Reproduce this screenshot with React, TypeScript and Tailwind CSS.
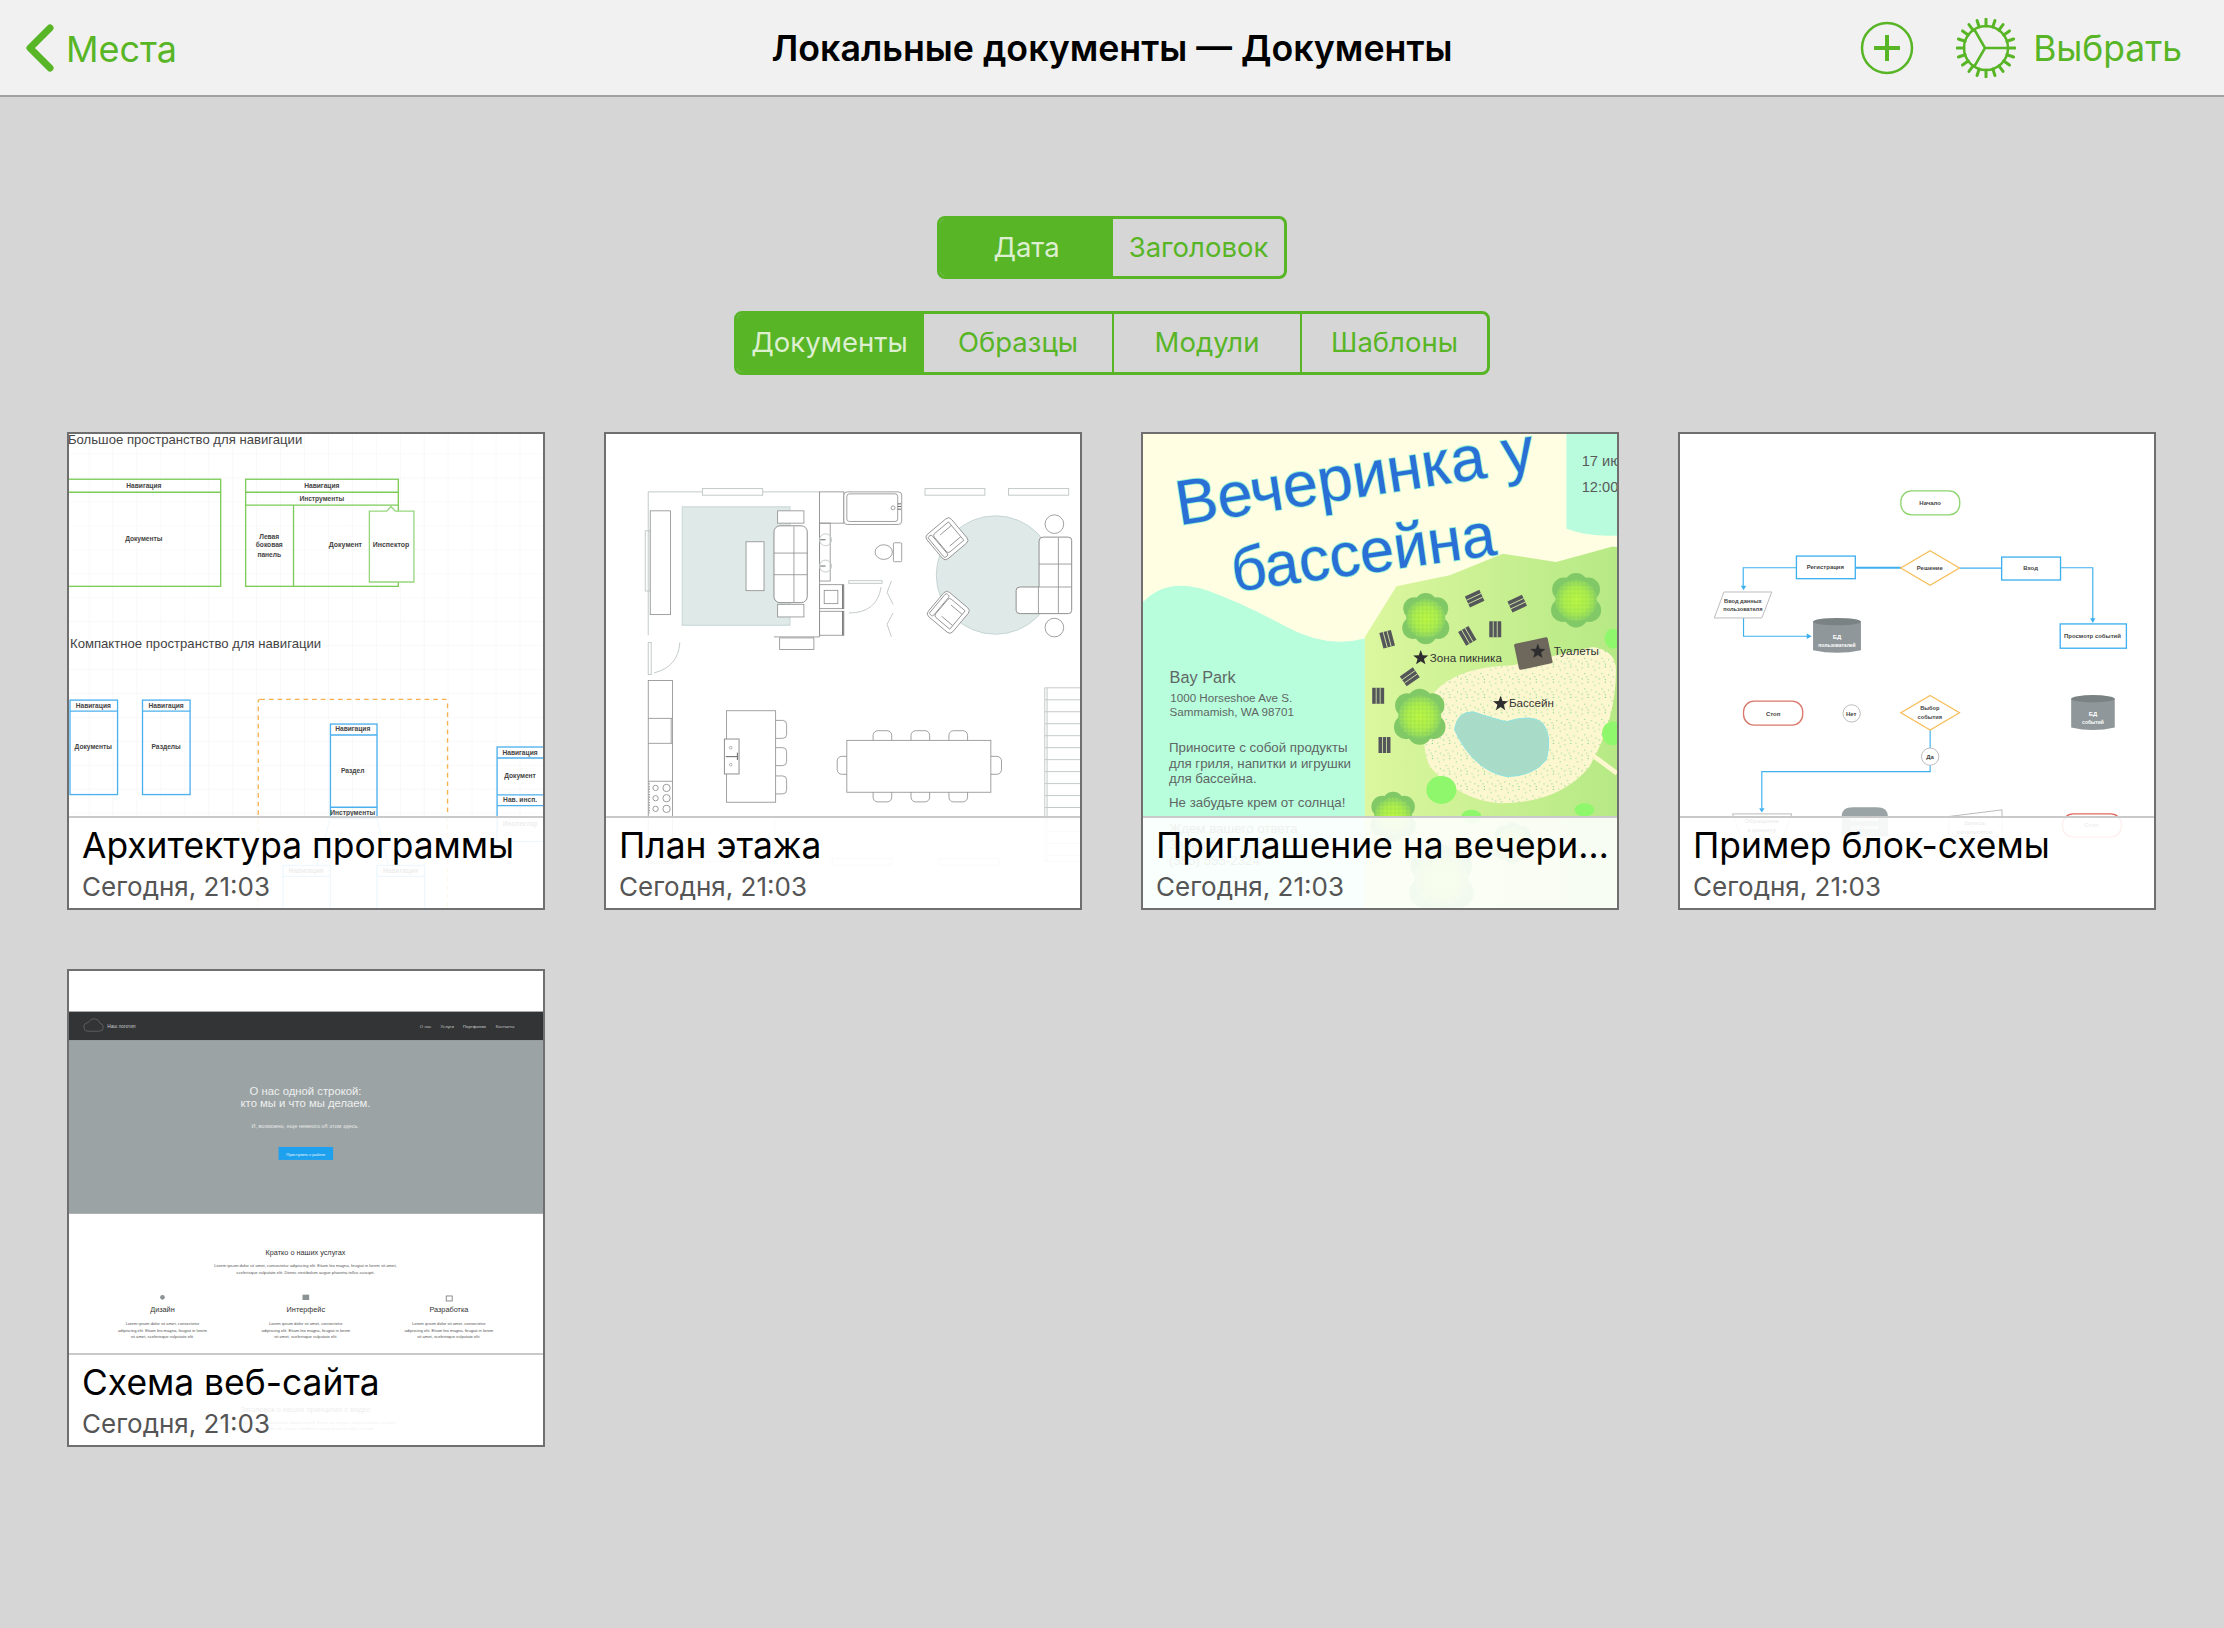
import type { ReactNode } from 'react';

const green = '#58b526';

function Lbl({ x, y, s = 18, t, fill = '#444', bold = false, start = false }: { x: number; y: number; s?: number; t: string; fill?: string; bold?: boolean; start?: boolean }) {
  return (
    <text x={x} y={y} fontSize={s} fill={fill} fontWeight={bold ? 700 : 400} textAnchor={start ? 'start' : 'middle'}>
      {t}
    </text>
  );
}

function ALbl({ x, y, t }: { x: number; y: number; t: string }) {
  return <Lbl x={x} y={y} t={t} s={20} bold />;
}

function Thumb({ box, children }: { box: string; children: ReactNode }) {
  return (
    <svg viewBox={box} className="block h-full w-full" fontFamily="'Liberation Sans', Arial, sans-serif" fill="none">
      {children}
    </svg>
  );
}

function Box({ x1, y1, x2, y2, stroke, sw = 4, fill = 'none', rx = 0 }: { x1: number; y1: number; x2: number; y2: number; stroke: string; sw?: number; fill?: string; rx?: number }) {
  return <rect x={x1} y={y1} width={x2 - x1} height={y2 - y1} stroke={stroke} strokeWidth={sw} fill={fill} rx={rx} />;
}

function ArchThumb() {
  const g = '#7ccb58';
  const b = '#4cb0ee';
  const grid = [];
  for (let i = 0; i < 20; i++) {
    grid.push(<path key={'v' + i} d={`M${115 + i * 72} 40V1465`} stroke="#f6f6f6" strokeWidth="2" />);
    grid.push(<path key={'h' + i} d={`M55 ${100 + i * 72}H1480`} stroke="#f6f6f6" strokeWidth="2" />);
  }
  return (
    <Thumb box="55 40 1425 1425">
      <rect x="55" y="40" width="1425" height="1425" fill="#fff" />
      {grid}
      <Lbl x={52} y={69} s={39.5} t="Большое пространство для навигации" start />
      <Box x1={50} y1={176} x2={511} y2={498} stroke={g} />
      <path d="M50 215H511" stroke={g} strokeWidth="4" />
      <ALbl x={280} y={202} t="Навигация" />
      <ALbl x={280} y={362} t="Документы" />
      <Box x1={586} y1={176} x2={1045} y2={498} stroke={g} />
      <path d="M586 215H1045M586 254H1045M730 254V498" stroke={g} strokeWidth="4" />
      <ALbl x={815} y={202} t="Навигация" />
      <ALbl x={815} y={241} t="Инструменты" />
      <ALbl x={657} y={355} t="Левая" />
      <ALbl x={657} y={381} t="боковая" />
      <ALbl x={657} y={411} t="панель" />
      <Lbl x={886} y={381} t="Документ" s={21} bold />
      <path d="M958 272H1010L1023 258L1036 272H1092V485H958Z" stroke="#98d67e" strokeWidth="4" fill="#fff" />
      <Lbl x={1023} y={379} t="Инспектор" s={21} bold />
      <Lbl x={58} y={682} s={39.5} t="Компактное пространство для навигации" start />
      <Box x1={58} y1={840} x2={201} y2={1124} stroke={b} />
      <path d="M58 873H201" stroke={b} strokeWidth="4" />
      <ALbl x={128} y={864} t="Навигация" />
      <ALbl x={128} y={988} t="Документы" />
      <Box x1={276} y1={840} x2={419} y2={1124} stroke={b} />
      <path d="M276 873H419" stroke={b} strokeWidth="4" />
      <ALbl x={347} y={864} t="Навигация" />
      <ALbl x={347} y={988} t="Разделы" />
      <rect x="624" y="838" width="569" height="640" rx="6" stroke="#f6b24f" strokeWidth="4" strokeDasharray="14 12" />
      <Box x1={841} y1={912} x2={981} y2={1195} stroke={b} />
      <path d="M841 945H981M841 1162H981" stroke={b} strokeWidth="4" />
      <ALbl x={908} y={933} t="Навигация" />
      <ALbl x={908} y={1059} t="Раздел" />
      <ALbl x={908} y={1185} t="Инструменты" />
      <path d="M841 1195L800 1337M981 1195L1015 1337" stroke={b} strokeWidth="3" />
      <Box x1={698} y1={1337} x2={841} y2={1480} stroke={b} />
      <Box x1={981} y1={1337} x2={1124} y2={1480} stroke={b} />
      <path d="M698 1370H841M981 1370H1124" stroke={b} strokeWidth="4" />
      <ALbl x={768} y={1360} t="Навигация" />
      <ALbl x={1052} y={1360} t="Навигация" />
      <Box x1={1342} y1={981} x2={1500} y2={1265} stroke={b} />
      <path d="M1342 1014H1500M1342 1125H1500M1342 1157H1500" stroke={b} strokeWidth="4" />
      <ALbl x={1411} y={1004} t="Навигация" />
      <ALbl x={1411} y={1073} t="Документ" />
      <ALbl x={1411} y={1147} t="Нав. инсп." />
      <ALbl x={1411} y={1217} t="Инспектор" />
    </Thumb>
  );
}

function Armchair({ x, y, rot }: { x: number; y: number; rot: number }) {
  return (
    <g transform={`translate(${x} ${y}) rotate(${rot})`} stroke="#8b8b8b" strokeWidth="2.5" fill="#fff">
      <rect x="-48" y="-48" width="96" height="96" rx="12" />
      <rect x="-42" y="-40" width="14" height="80" rx="5" />
      <path d="M-26 -28Q-26 -36 -18 -36H36V36H-18Q-26 36 -26 28Z" />
      <path d="M-8 -22H36M-8 22H36" />
    </g>
  );
}

function PlanThumb() {
  const line = '#8f8f8f';
  const wall = '#c4caca';
  const stairs = [];
  for (let y = 803; y < 1330; y += 36) stairs.push(<path key={y} d={`M1364 ${y}H1471`} stroke={wall} strokeWidth="3" />);
  return (
    <Thumb box="45 40 1425 1425">
      <rect x="45" y="40" width="1425" height="1425" fill="#fff" />
      <path d="M172 645V214H688" stroke={wall} strokeWidth="3" />
      <Box x1={335} y1={204} x2={516} y2={224} stroke={wall} sw={3} fill="#fff" />
      <Box x1={1004} y1={204} x2={1184} y2={224} stroke={wall} sw={3} fill="#fff" />
      <Box x1={1255} y1={204} x2={1436} y2={224} stroke={wall} sw={3} fill="#fff" />
      <Box x1={163} y1={331} x2={178} y2={512} stroke={wall} sw={3} />
      <Box x1={178} y1={271} x2={239} y2={583} stroke={line} sw={2.5} fill="#fff" />
      <Box x1={274} y1={259} x2={598} y2={615} stroke="#c5d5d3" sw={3} fill="#dfe9e8" />
      <Box x1={466} y1={364} x2={520} y2={511} stroke={line} sw={2.5} fill="#fff" />
      <Box x1={561} y1={271} x2={640} y2={308} stroke={line} sw={2.5} fill="#fff" />
      <Box x1={561} y1={552} x2={640} y2={590} stroke={line} sw={2.5} fill="#fff" />
      <Box x1={550} y1={316} x2={650} y2={547} stroke={line} sw={3} fill="#fff" rx={18} />
      <path d="M610 318V545M550 398H650M550 463H650" stroke={line} strokeWidth="2.5" />
      <path d="M687 214V650H550" stroke={line} strokeWidth="2.5" />
      <Box x1={567} y1={653} x2={670} y2={688} stroke={line} sw={2.5} fill="#fff" />
      <Box x1={687} y1={214} x2={760} y2={308} stroke={line} sw={2.5} fill="#fff" />
      <Box x1={760} y1={214} x2={934} y2={312} stroke={line} sw={2.5} fill="#fff" rx={10} />
      <Box x1={769} y1={220} x2={922} y2={303} stroke={line} sw={2.5} rx={8} />
      <circle cx="908" cy="262" r="6" stroke={line} strokeWidth="2.5" />
      <path d="M922 250H932M922 258H932M922 266H932" stroke="#666" strokeWidth="3" />
      <Box x1={687} y1={308} x2={719} y2={482} stroke={line} sw={2.5} />
      <circle cx="705" cy="358" r="18" stroke={wall} strokeWidth="3" />
      <circle cx="705" cy="437" r="18" stroke={wall} strokeWidth="3" />
      <path d="M689 358H705M689 437H705" stroke="#666" strokeWidth="3" />
      <Box x1={687} y1={493} x2={760} y2={565} stroke={line} sw={2.5} />
      <Box x1={701} y1={510} x2={742} y2={550} stroke={line} sw={2.5} />
      <Box x1={687} y1={573} x2={760} y2={645} stroke={line} sw={2.5} />
      <path d="M757 493V565M757 573V645" stroke="#666" strokeWidth="4" />
      <ellipse cx="880" cy="395" rx="26" ry="22" stroke={line} strokeWidth="2.5" />
      <Box x1={909} y1={367} x2={934} y2={424} stroke={line} sw={2.5} fill="#fff" rx={3} />
      <Box x1={775} y1={481} x2={875} y2={489} stroke={wall} sw={3} />
      <path d="M775 578Q860 578 872 500M903 482L890 516L908 552M908 578L890 612L903 650" stroke={wall} strokeWidth="3" />
      <circle cx="1216" cy="464" r="178" fill="#dfe9e8" stroke="#c5d5d3" strokeWidth="3" />
      <Armchair x={1070} y={355} rot={-40} />
      <Armchair x={1074} y={576} rot={40} />
      <path d="M1347 362Q1347 350 1359 350H1435Q1445 350 1445 360V570Q1445 580 1435 580H1290Q1278 580 1278 570V510Q1278 500 1290 500H1347Z" stroke={line} strokeWidth="3" fill="#fff" />
      <path d="M1405 352V578M1347 431H1443M1347 500H1443M1345 500V580" stroke={line} strokeWidth="2.5" />
      <circle cx="1393" cy="311" r="28" stroke={line} strokeWidth="2.5" fill="#fff" />
      <circle cx="1393" cy="622" r="28" stroke={line} strokeWidth="2.5" fill="#fff" />
      <Box x1={172} y1={667} x2={181} y2={763} stroke={wall} sw={3} />
      <path d="M190 758Q262 740 267 667" stroke={wall} strokeWidth="3" />
      <Box x1={172} y1={781} x2={245} y2={1330} stroke={line} sw={2.5} />
      <path d="M172 895H245M172 970H245M172 1084H245M241 895V970" stroke={line} strokeWidth="2.5" />
      {[1104, 1135, 1167].map((y) => (
        <g key={y} stroke="#9b9b9b" strokeWidth="3">
          <circle cx="194" cy={y} r="8" />
          <circle cx="227" cy={y} r="11" />
        </g>
      ))}
      <path d="M175 1090V1180" stroke="#9b9b9b" strokeWidth="4" strokeDasharray="4 4" />
      {[901, 983, 1068].map((y) => (
        <rect key={y} x="540" y={y} width="48" height="54" rx="12" stroke={line} strokeWidth="2.5" />
      ))}
      <Box x1={407} y1={872} x2={555} y2={1147} stroke={line} sw={2.5} fill="#fff" />
      <Box x1={401} y1={957} x2={445} y2={1062} stroke={line} sw={3} fill="#fff" />
      <path d="M405 1010H440M440 998V1020" stroke="#666" strokeWidth="3" />
      <circle cx="420" cy="983" r="4" stroke={line} strokeWidth="2" />
      <circle cx="420" cy="1034" r="4" stroke={line} strokeWidth="2" />
      {[848, 962, 1076].map((x) => (
        <g key={x}>
          <rect x={x} y="932" width="56" height="50" rx="14" stroke={line} strokeWidth="2.5" />
          <rect x={x} y="1096" width="56" height="50" rx="14" stroke={line} strokeWidth="2.5" />
        </g>
      ))}
      <rect x="740" y="1009" width="50" height="54" rx="14" stroke={line} strokeWidth="2.5" />
      <rect x="1184" y="1009" width="50" height="54" rx="14" stroke={line} strokeWidth="2.5" />
      <Box x1={769} y1={961} x2={1202} y2={1117} stroke={line} sw={2.5} fill="#fff" />
      <path d="M1364 803V1325H1471M1371 803V1325" stroke={wall} strokeWidth="3" />
      {stairs}
      <path d="M172 1325H553V1190" stroke={wall} strokeWidth="3" />
      <Box x1={725} y1={1316} x2={905} y2={1336} stroke={wall} sw={3} />
      <Box x1={1047} y1={1316} x2={1227} y2={1336} stroke={wall} sw={3} />
    </Thumb>
  );
}

function Tree({ x, y, r }: { x: number; y: number; r: number }) {
  const blobs = [[-0.55, -0.5], [0.55, -0.5], [-0.6, 0.45], [0.6, 0.45], [0, -0.7], [0, 0.7]];
  return (
    <g>
      {blobs.map(([a, b], i) => (
        <circle key={i} cx={x + a * r} cy={y + b * r} r={r * 0.54} fill="#80c966" />
      ))}
      <circle cx={x} cy={y} r={r * 0.95} fill="url(#treeGlow)" />
      <circle cx={x} cy={y} r={r * 0.95} fill="url(#treeDots)" />
    </g>
  );
}

function Bench({ x, y, rot }: { x: number; y: number; rot: number }) {
  return (
    <g transform={`translate(${x} ${y}) rotate(${rot})`}>
      <rect x="-18" y="-24" width="36" height="48" fill="#55565a" />
      <path d="M-6 -24V24M6 -24V24" stroke="#d4eea8" strokeWidth="2.5" />
    </g>
  );
}

function Star({ x, y, r }: { x: number; y: number; r: number }) {
  const pts = [];
  for (let i = 0; i < 10; i++) {
    const rad = i % 2 === 0 ? r : r * 0.42;
    const a = -Math.PI / 2 + (i * Math.PI) / 5;
    pts.push(`${x + rad * Math.cos(a)},${y + rad * Math.sin(a)}`);
  }
  return <polygon points={pts.join(' ')} fill="#2e2e30" />;
}

function PartyThumb() {
  return (
    <Thumb box="38 40 1425 1425">
      <defs>
        <pattern id="dots" width="52" height="46" patternUnits="userSpaceOnUse">
          {[[6, 8], [24, 4], [44, 14], [14, 24], [34, 28], [48, 34], [6, 40], [24, 42], [40, 3], [20, 34]].map(([x, y], i) => (
            <circle key={i} cx={x} cy={y} r="1.6" fill="#52c878" />
          ))}
        </pattern>
        <pattern id="treeDots" width="12" height="12" patternUnits="userSpaceOnUse">
          <circle cx="3" cy="3" r="1.6" fill="#7cc95c" />
          <circle cx="9" cy="8" r="1.6" fill="#c9f85a" />
        </pattern>
        <radialGradient id="treeGlow">
          <stop offset="0" stopColor="#b9f53f" />
          <stop offset="0.6" stopColor="#a8ea4c" />
          <stop offset="1" stopColor="#86cf64" />
        </radialGradient>
        <linearGradient id="park" x1="0" y1="0" x2="1" y2="0">
          <stop offset="0" stopColor="#dcf79f" />
          <stop offset="1" stopColor="#b6e985" />
        </linearGradient>
      </defs>
      <rect x="38" y="40" width="1425" height="1425" fill="#fffee3" />
      <path d="M1311 40H1463V345Q1380 350 1311 325Z" fill="#b8fbdd" />
      <Lbl x={1357} y={137} s={44} fill="#5a5a5a" t="17 июня" start />
      <Lbl x={1357} y={213} s={44} fill="#5a5a5a" t="12:00" start />
      <path d="M38 545Q110 470 230 510Q340 550 470 620Q590 685 705 655V1465H38Z" fill="#b8fedd" />
      <path d="M705 650L800 498L960 465L1120 400L1280 425L1450 378L1463 380V1465H705Z" fill="url(#park)" />
      <text x="146" y="314" transform="rotate(-8.8 146 314)" fontSize="190" fill="#2a6fd6" stroke="#8ff0d0" strokeWidth="5" paintOrder="stroke">
        Вечеринка у
      </text>
      <text x="312" y="514" transform="rotate(-8 312 514)" fontSize="185" fill="#2a6fd6" stroke="#8ff0d0" strokeWidth="5" paintOrder="stroke">
        бассейна
      </text>
      <Lbl x={118} y={790} s={49} fill="#5f6664" t="Bay Park" start />
      <Lbl x={120} y={847} s={35} fill="#5f6664" t="1000 Horseshoe Ave S." start />
      <Lbl x={118} y={887} s={35} fill="#5f6664" t="Sammamish, WA 98701" start />
      <Lbl x={116} y={997} s={40} fill="#5f6664" t="Приносите с собой продукты" start />
      <Lbl x={116} y={1043} s={40} fill="#5f6664" t="для гриля, напитки и игрушки" start />
      <Lbl x={116} y={1089} s={40} fill="#5f6664" t="для бассейна." start />
      <Lbl x={116} y={1160} s={40} fill="#5f6664" t="Не забудьте крем от солнца!" start />
      <Lbl x={116} y={1241} s={40} fill="#5f6664" t="Ждем вашего ответа" start />
      <Lbl x={116} y={1288} s={40} fill="#5f6664" t="Звоните" start />
      <Lbl x={116} y={1336} s={40} fill="#5f6664" t="(555) 555-2324" start />
      <path d="M915 815Q980 740 1150 735L1390 680Q1460 690 1460 750Q1460 900 1380 1040Q1290 1150 1110 1150Q990 1140 900 1040Q860 950 915 815Z" fill="#fdf7cf" />
      <path d="M915 815Q980 740 1150 735L1390 680Q1460 690 1460 750Q1460 900 1380 1040Q1290 1150 1110 1150Q990 1140 900 1040Q860 950 915 815Z" fill="url(#dots)" />
      <path d="M975 930Q980 875 1030 875Q1090 895 1130 905Q1210 880 1240 910Q1270 950 1250 1020Q1210 1070 1130 1070Q1030 1050 975 930Z" fill="#a9dcc8" stroke="#8fe3e3" strokeWidth="3" />
      <path d="M1395 1010L1463 1060" stroke="#fdf7cf" strokeWidth="14" />
      <Tree x={888} y={595} r={62} />
      <Tree x={1340} y={540} r={66} />
      <Tree x={870} y={890} r={68} />
      <Tree x={790} y={1190} r={60} />
      <Tree x={935} y={1380} r={85} />
      <Tree x={1150} y={1270} r={50} />
      <ellipse cx="935" cy="1110" rx="45" ry="42" fill="#8ef76b" />
      <ellipse cx="1450" cy="655" rx="24" ry="30" fill="#8ef76b" />
      <ellipse cx="1450" cy="940" rx="32" ry="36" fill="#8ef76b" />
      <ellipse cx="1365" cy="1170" rx="30" ry="20" fill="#8ef76b" />
      <ellipse cx="1025" cy="1190" rx="30" ry="20" fill="#8ef76b" />
      <Bench x={1035} y={535} rot={65} />
      <Bench x={1163} y={550} rot={65} />
      <Bench x={1013} y={647} rot={-30} />
      <Bench x={1097} y={627} rot={0} />
      <Bench x={772} y={657} rot={-15} />
      <Bench x={840} y={770} rot={55} />
      <Bench x={745} y={827} rot={0} />
      <Bench x={764} y={975} rot={0} />
      <rect x="1160" y="660" width="103" height="80" rx="5" fill="#6d675c" transform="rotate(-12 1212 700)" />
      <Star x={873} y={713} r={24} />
      <Star x={1225} y={694} r={24} />
      <Star x={1113} y={851} r={24} />
      <Lbl x={900} y={724} s={35} fill="#333" t="Зона пикника" start />
      <Lbl x={1273} y={704} s={35} fill="#333" t="Туалеты" start />
      <Lbl x={1138} y={860} s={35} fill="#333" t="Бассейн" start />
    </Thumb>
  );
}

function Cylinder({ x, y, w, h, a, b }: { x: number; y: number; w: number; h: number; a: string; b: string }) {
  const cx = x + w / 2;
  return (
    <g>
      <path d={`M${x} ${y + 10}V${y + h - 10}Q${cx} ${y + h + 6} ${x + w} ${y + h - 10}V${y + 10}Z`} fill="#8f979a" />
      <ellipse cx={cx} cy={y + 10} rx={w / 2} ry="11" fill="#7b8284" />
      <Lbl x={cx} y={y + 61} s={18} fill="#fff" t={a} bold />
      <Lbl x={cx} y={y + 86} s={15} fill="#fff" t={b} bold />
    </g>
  );
}

function FlowThumb() {
  const b = '#3eb0ee';
  const o = '#f7bf5c';
  return (
    <Thumb box="60 40 1425 1425">
      <rect x="60" y="40" width="1425" height="1425" fill="#fff" />
      <path d="M724 443H410M250 500V442H410M588 441H724M900 443H1027M1204 442H1301V600M251 593V648H450M812 930V985M812 1035V1055H306V1165" stroke={b} strokeWidth="3.5" />
      <path d="M243 496H259L251 510ZM1293 594H1309L1301 608ZM441 640V656L456 648ZM298 1165H314L306 1178Z" fill={b} />
      <rect x="724" y="211" width="177" height="72" rx="32" stroke="#8cd46e" strokeWidth="4" fill="#fff" />
      <Lbl x={812} y={254} t="Начало" bold />
      <Box x1={410} y1={407} x2={587} y2={475} stroke={b} fill="#fff" />
      <Lbl x={497} y={447} t="Регистрация" bold />
      <path d="M812 391L900 443L812 495L724 443Z" stroke={o} strokeWidth="4" fill="#fff" />
      <Lbl x={811} y={450} t="Решение" bold />
      <Box x1={1027} y1={410} x2={1204} y2={479} stroke={b} fill="#fff" />
      <Lbl x={1114} y={450} t="Вход" bold />
      <path d="M192 515H336L306 593H163Z" stroke="#bcbcbc" strokeWidth="3" fill="#fff" />
      <Lbl x={249} y={548} s={17} t="Ввод данных" bold />
      <Lbl x={249} y={572} s={17} t="пользователя" bold />
      <Box x1={1203} y1={611} x2={1402} y2={684} stroke={b} fill="#fff" />
      <Lbl x={1300} y={652} t="Просмотр событий" bold />
      <Cylinder x={460} y={594} w={144} h={106} a="БД" b="пользователей" />
      <rect x="251" y="843" width="178" height="72" rx="32" stroke="#d9776b" strokeWidth="4" fill="#fff" />
      <Lbl x={340} y={887} t="Стоп" bold />
      <circle cx="576" cy="880" r="26" stroke="#bbb" strokeWidth="3" fill="#fff" />
      <Lbl x={575} y={887} t="Нет" bold />
      <path d="M812 826L900 878L812 930L724 878Z" stroke={o} strokeWidth="4" fill="#fff" />
      <Lbl x={811} y={871} s={17} t="Выбор" bold />
      <Lbl x={811} y={897} s={17} t="события" bold />
      <Cylinder x={1236} y={826} w={131} h={106} a="БД" b="событий" />
      <circle cx="812" cy="1010" r="26" stroke="#bbb" strokeWidth="3" fill="#fff" />
      <Lbl x={812} y={1017} t="Да" bold />
      <path d="M218 1182H396L370 1252H244Z" stroke="#bbb" strokeWidth="3" fill="#fff" />
      <Lbl x={306} y={1210} t="Обращение" bold />
      <Lbl x={306} y={1236} t="к клиенту" bold />
      <path d="M546 1190Q546 1162 580 1162H650Q685 1162 685 1190V1250H546Z" fill="#9aa4a6" />
      <Lbl x={614} y={1204} t="Отправка" fill="#fff" bold />
      <Lbl x={614} y={1228} t="договора" fill="#fff" bold />
      <path d="M868 1190L1028 1170V1250H868Z" stroke="#bbb" strokeWidth="3" fill="#fff" />
      <Lbl x={946} y={1216} t="Запись" bold />
      <Lbl x={946} y={1242} t="результатов" bold />
      <rect x="1210" y="1182" width="177" height="70" rx="32" stroke="#e2685c" strokeWidth="4" fill="#fff" />
      <Lbl x={1297} y={1223} t="Стоп" bold />
    </Thumb>
  );
}

function Service({ x, title, icon }: { x: number; title: string; icon: ReactNode }) {
  return (
    <g>
      {icon}
      <Lbl x={x} y={1055} s={22} fill="#333" t={title} />
      <Lbl x={x} y={1094} s={12.5} fill="#555" t="Lorem ipsum dolor sit amet, consectetur" />
      <Lbl x={x} y={1114} s={12.5} fill="#555" t="adipiscing elit. Etiam leo magna, feugiat in lorem" />
      <Lbl x={x} y={1133} s={12.5} fill="#555" t="sit amet, scelerisque vulputate elit." />
    </g>
  );
}

function SiteThumb() {
  return (
    <Thumb box="55 30 1425 1425">
      <rect x="55" y="30" width="1425" height="1425" fill="#fff" />
      <rect x="55" y="152" width="1425" height="87" fill="#333436" />
      <path d="M112 211Q100 211 100 198Q100 186 113 185Q120 172 134 174Q146 176 148 187Q158 189 158 199Q158 211 146 211Z" stroke="#5c5e60" strokeWidth="3" />
      <Lbl x={170} y={201} s={14.3} fill="#c9c9c9" t="Наш логотип" start />
      <Lbl x={1127} y={201} s={13} fill="#c9c9c9" t="О нас" />
      <Lbl x={1192} y={201} s={13} fill="#c9c9c9" t="Услуги" />
      <Lbl x={1274} y={201} s={13} fill="#c9c9c9" t="Портфолио" />
      <Lbl x={1366} y={201} s={13} fill="#c9c9c9" t="Контакты" />
      <rect x="55" y="239" width="1425" height="521" fill="#9ca3a4" />
      <Lbl x={766} y={402} s={34} fill="#eef0f0" t="О нас одной строкой:" />
      <Lbl x={766} y={439} s={34} fill="#eef0f0" t="кто мы и что мы делаем." />
      <Lbl x={765} y={503} s={16.7} fill="#e4e7e7" t="И, возможно, еще немного об этом здесь." />
      <rect x="685" y="559" width="164" height="39" fill="#1da1ee" />
      <Lbl x={767} y={585} s={12.3} fill="#e8f6ff" t="Приступить к работе" />
      <Lbl x={766} y={885} s={22} fill="#333" t="Кратко о наших услугах" />
      <Lbl x={766} y={921} s={12.6} fill="#555" t="Lorem ipsum dolor sit amet, consectetur adipiscing elit. Etiam leo magna, feugiat in lorem sit amet," />
      <Lbl x={766} y={941} s={12.6} fill="#555" t="scelerisque vulputate elit. Donec vestibulum augue pharetra tellus suscipit." />
      <Service x={336} title="Дизайн" icon={<circle cx="336" cy="1011" r="7" fill="#8b9294" />} />
      <Service x={767} title="Интерфейс" icon={<rect x="757" y="1003" width="20" height="16" fill="#8b9294" />} />
      <Service x={1197} title="Разработка" icon={<rect x="1189" y="1007" width="18" height="15" stroke="#777" strokeWidth="2.5" />} />
      <Lbl x={766} y={1355} s={22} fill="#333" t="Заголовок о наших принципах с видео" />
      <Lbl x={766} y={1392} s={12.6} fill="#555" t="Lorem ipsum dolor sit amet, consectetur adipiscing elit. Etiam leo magna, feugiat in lorem sit amet," />
      <Lbl x={766} y={1411} s={12.6} fill="#555" t="scelerisque vulputate elit. Donec vestibulum augue pharetra tellus suscipit." />
    </Thumb>
  );
}

function DocCard({ title, children }: { title: string; children: ReactNode }) {
  return (
    <div className="relative h-[478px] w-[478px] overflow-hidden border-2 border-[#6f6f6f] bg-white">
      {children}
      <div className="absolute inset-x-0 bottom-0 h-[92px] border-t-2 border-[#c9c9c9] bg-white/90 pt-[5px] pr-[1px] pl-[13px]">
        <div className="truncate text-[35.4px] leading-[46px] text-black">{title}</div>
        <div className="text-[26px] leading-[35px] text-[#555555]">Сегодня, 21:03</div>
      </div>
    </div>
  );
}

function GearIcon() {
  const teeth = [];
  for (let i = 0; i < 20; i++) {
    const a = (i * Math.PI) / 10;
    teeth.push(
      <path
        key={i}
        d={`M${30 + 22 * Math.cos(a)} ${30 + 22 * Math.sin(a)}L${30 + 29 * Math.cos(a)} ${30 + 29 * Math.sin(a)}`}
        stroke={green}
        strokeWidth="3"
        strokeLinecap="round"
      />,
    );
  }
  return (
    <svg width="60" height="60" viewBox="0 0 60 60" fill="none">
      <circle cx="30" cy="30" r="22" stroke={green} strokeWidth="2.5" />
      {teeth}
      <path d="M29 30H52M29 30L18 11M29 30L18 49" stroke={green} strokeWidth="2.5" />
    </svg>
  );
}

const sortTabs = ['Дата', 'Заголовок'];
const sourceTabs = [
  { label: 'Документы', cls: 'w-[185px] bg-[#58b526] text-[#dcefd0]' },
  { label: 'Образцы', cls: 'w-[190px] border-l-2 border-[#58b526] text-[#58b526]' },
  { label: 'Модули', cls: 'w-[188px] border-l-2 border-[#58b526] text-[#58b526]' },
  { label: 'Шаблоны', cls: 'flex-1 border-l-2 border-[#58b526] text-[#58b526]' },
];

export default function App() {
  return (
    <div className="flex min-h-[1628px] flex-col bg-[#d6d6d6] font-[Inter,'Noto_Sans',sans-serif]">
      <header className="flex h-[97px] items-center border-b-2 border-[#a2a2a2] bg-[#f1f1f1] px-[25px]">
        <div className="flex flex-1 items-center gap-[11px] text-[#58b526]">
          <svg width="30" height="48" viewBox="0 0 30 48" fill="none">
            <path d="M25 4L5 24L25 44" stroke={green} strokeWidth="7" strokeLinecap="round" strokeLinejoin="round" />
          </svg>
          <span className="mt-[2px] text-[36px]">Места</span>
        </div>
        <h1 className="mt-[2px] text-[35.75px] font-semibold text-black">Локальные документы — Документы</h1>
        <div className="flex flex-1 items-center justify-end text-[#58b526]">
          <svg width="54" height="54" viewBox="0 0 54 54" fill="none">
            <circle cx="27" cy="27" r="25" stroke={green} strokeWidth="2.5" />
            <path d="M27 14V40M14 27H40" stroke={green} strokeWidth="4" />
          </svg>
          <span className="mr-[17px] ml-[42px] flex">
            <GearIcon />
          </span>
          <span className="mt-[2px] mr-[17px] text-[35.4px]">Выбрать</span>
        </div>
      </header>

      <main className="flex flex-col items-center pt-[119px]">
        <div className="flex h-[63px] w-[350px] overflow-hidden rounded-[8px] border-[3px] border-[#58b526] text-[27.5px]">
          {sortTabs.map((t, i) => (
            <div key={t} className={i === 0 ? 'flex w-[173px] items-center justify-center bg-[#58b526] text-[#dcefd0]' : 'flex flex-1 items-center justify-center text-[#58b526]'}>
              {t}
            </div>
          ))}
        </div>
        <div className="mt-[32px] flex h-[64px] w-[756px] overflow-hidden rounded-[8px] border-[3px] border-[#58b526] text-[27.5px]">
          {sourceTabs.map((t) => (
            <div key={t.label} className={`flex items-center justify-center ${t.cls}`}>
              {t.label}
            </div>
          ))}
        </div>

        <div className="mt-[57px] mr-[1px] grid grid-cols-[repeat(4,478px)] gap-x-[59px] gap-y-[59px]">
          <DocCard title="Архитектура программы"><ArchThumb /></DocCard>
          <DocCard title="План этажа"><PlanThumb /></DocCard>
          <DocCard title="Приглашение на вечеринку у бассейна"><PartyThumb /></DocCard>
          <DocCard title="Пример блок-схемы"><FlowThumb /></DocCard>
          <DocCard title="Схема веб-сайта"><SiteThumb /></DocCard>
        </div>
      </main>
    </div>
  );
}
